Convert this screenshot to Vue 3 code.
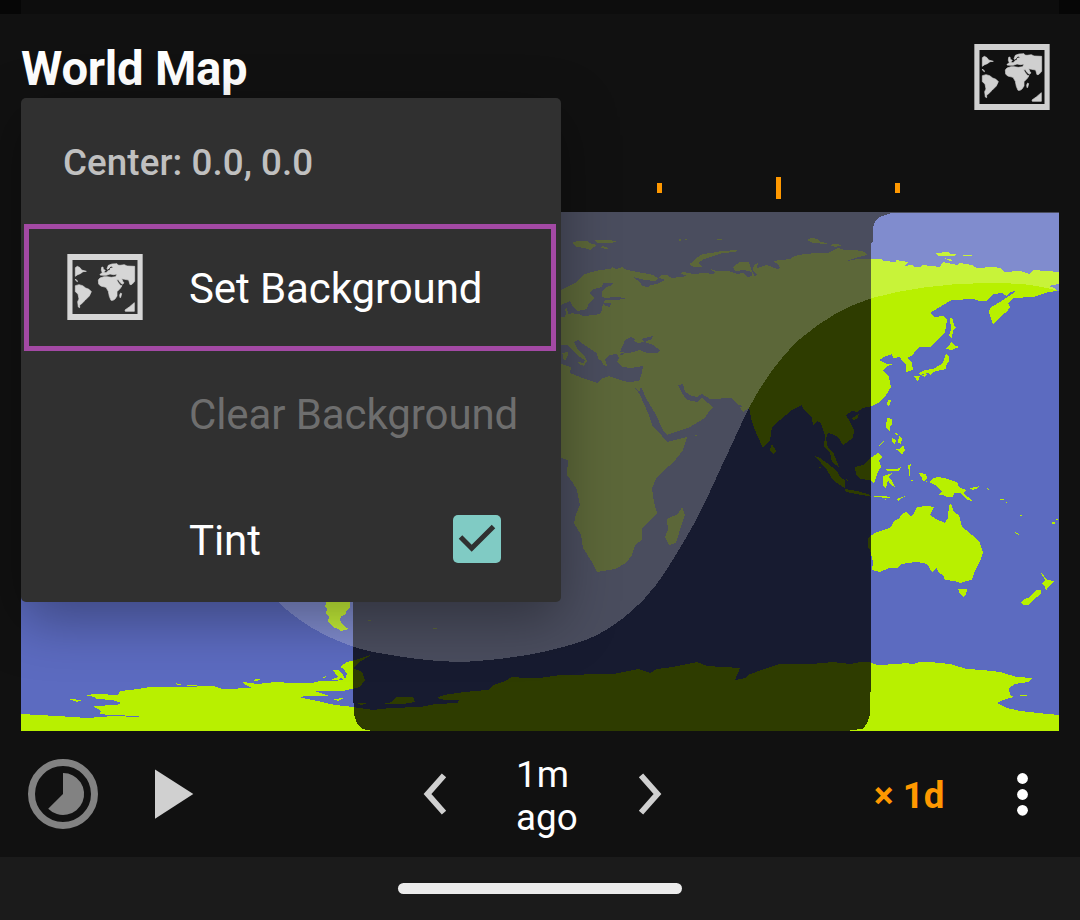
<script setup>
const ticks = [
  { x: 657, h: 10 },
  { x: 776, h: 22 },
  { x: 895, h: 10 },
]
</script>

<template>
  <div class="screen">
    <svg class="defs" width="0" height="0">
      <symbol id="map-icon" viewBox="73 72 226 198">
        <path fill="currentColor" fill-rule="evenodd" d="M73 72H299V270H73ZM88.500 90V252H283.500V90Z" />
        <g fill="currentColor" stroke="currentColor" stroke-width="2" stroke-linejoin="round">
          <path d="M97 113L103 109L111 113L116 120L130 124L120 125L112 131L104 134L97 139Z" />
          <path d="M97 147L100 150L104 153L103 155L98 151Z" />
          <path d="M97 167L108 164L119 167L128 174L138 178L145 185L139 198L127 210L116 221L110 225L110 233L106 231L104 215L108 207L105 192L97 185Z" />
          <path d="M172 132L178 128L175 121L176 112L180 111L181 118L187 121L182 127L189 128L196 122L192 116L196 106L207 102L222 101L224 105L231 106L244 104L252 108L275 109V154L267 163L261 164L257 150L245 148L236 146L240 155L243 159L237 163L231 157L226 149L221 149L226 158L232 166L237 167L232 175L222 185L222 198L216 207L210 211L204 211L199 199L196 184L189 172L173 168L167 162L166 150L171 144L183 140L192 140L205 142L218 140L222 132L212 134L201 132L190 136L178 136L171 135Z" />
          <path d="M233 189L236 191L233 202L231 203L230 195Z" />
          <path d="M274 218V244H247L246 240L260 230Z" />
        </g>
        <path class="gap" fill="none" stroke-width="3" d="M194 119Q201 121 200 115Q203 109 208 112" />
      </symbol>
    </svg>

    <div class="status"></div>

    <header class="head">
      <h1>World Map</h1>
      <svg class="mapicon head-icon"><use href="#map-icon" /></svg>
    </header>

    <i v-for="t in ticks" :key="t.x" class="tick" :style="{ left: t.x + 'px', height: t.h + 'px' }"></i>

    <svg class="world" viewBox="21 212 1038 519" shape-rendering="crispEdges">
      <rect x="21" y="212" width="1038" height="519" fill="#5c6bc0" />
      <g fill="#b8f000">
        <!-- Eurasia and Africa -->
        <path d="M540 300L561 290L575 283L585 274L592 272L600 270L610 269L612 267L616 269L622 267L627 270L643 273L653 275L658 278L655 281L645 280L633 277L640 282L642 286L648 287L651 285L657 284L665 280L659 278L661 275L667 275L672 278L680 277L687 276L680 273L684 272L693 274L704 273L713 274L715 272L710 269L717 271L728 271L737 274L743 273L747 277L752 276L752 272L744 270L735 271L733 267L740 262L749 262L751 269L755 277L748 281L742 279L750 280L757 275L753 270L754 265L758 263L757 268L764 271L765 276L759 274L754 270L760 267L767 265L777 269L780 268L779 265L773 261L790 259L795 256L804 254L817 253L828 253L838 248L845 250L855 250L865 252L867 255L855 258L847 261L858 259L872 259L882 259L883 261L896 262L896 260L908 262L904 266L912 265L915 267L920 267L922 265L940 267L943 262L957 265L960 263L972 265L977 268L993 267L1000 268L1005 272L1020 271L1030 274L1033 270L1059 272V284L1048 286L1055 288L1057 291L1048 292L1033 297L1013 298L1008 303L1010 307L1007 312L1002 315L993 324L989 313L990 308L1000 302L1012 294L1016 291L1010 292L1007 296L1002 293L993 294L986 301L979 301L973 299L952 300L943 305L930 313L935 317L943 316L947 320L945 332L938 339L930 347L920 347L915 351L913 355L907 358L912 363L913 370L906 372L906 364L902 361L900 357L893 358L892 354L886 356L879 360L887 364L893 364L887 366L883 370L889 377L891 387L885 397L878 403L872 406L863 408L857 412L852 411L846 415L850 422L854 430L853 438L843 445L838 437L834 435L828 433L826 438L828 448L833 452L839 467L832 462L830 453L824 447L825 435L821 423L817 421L813 425L812 418L803 408L802 405L792 410L780 420L772 427L770 440L763 448L757 435L752 422L749 408L743 412L740 407L743 406L738 405L732 398L710 399L702 394L697 397L692 396L685 392L683 384L678 385L682 393L687 400L697 402L702 398L713 407L709 411L705 418L690 427L667 435L663 430L655 413L647 400L641 387L639 392L633 385L640 395L648 413L653 427L658 431L667 442L687 437L683 450L673 463L664 470L656 479L652 488L654 502L657 513L642 528L642 540L635 545L632 555L626 563L615 569L597 572L592 562L583 548L581 535L574 523L576 514L580 505L577 490L573 483L567 475L568 460L561 458L540 458Z" />
        <!-- Arctic islands -->
        <path d="M572 243L577 241L587 241L592 244L597 245L590 250L585 248L577 247ZM595 240L606 240L617 241L612 243L597 243ZM602 246L609 248L606 249L601 248ZM689 264L693 262L696 258L703 254L711 253L722 251L737 250L735 252L723 253L710 257L704 259L698 263L702 267L694 267ZM679 239H681V241H679ZM685 239H687V240H685ZM717 239H722V240H717ZM807 240L811 238L818 239L820 242L827 243L826 244L813 243ZM829 245L834 244L843 245L835 247ZM936 253L948 252L951 254L957 254L954 256L938 256ZM963 255H972V256H963ZM944 258L953 260L950 261Z" />
        <!-- Madagascar, Sri Lanka -->
        <path d="M682 507L685 515L682 523L676 543L669 545L665 537L668 530L667 519L678 514ZM772 444L776 451L773 454L770 450ZM695 435H697V436H695Z" />
        <!-- Japan and Sakhalin -->
        <path d="M951 342L954 345L959 347L952 350L945 349L949 346ZM946 353L949 357L949 361L946 366L946 369L933 372L931 375L928 373L920 375L919 373L925 370L933 369L942 364L944 360ZM950 318L953 319L954 326L956 328L953 330L952 338L949 336L951 330ZM914 376L920 376L918 382ZM921 375L927 374L925 377Z" />
        <!-- South-east Asia -->
        <path d="M888 400L891 400L889 407L887 405ZM852 418L859 414L857 419L853 420ZM887 418L892 419L892 424L890 427L890 432L886 427ZM892 450L899 449L903 445L905 450L902 455L898 450ZM893 432L898 434L897 436ZM892 438L896 440L895 445L892 442ZM899 436L902 439L901 444L898 443ZM884 441L879 447L878 446ZM815 456L820 458L827 463L837 471L840 477L845 480V488L840 485L833 480L827 470ZM845 489L857 491L868 494L872 497L862 495L846 492ZM855 467L863 465L872 457L878 453L883 457L879 460L881 467L878 472L874 483L870 480L860 479L856 475ZM885 469L897 469L901 467L899 471L888 471ZM883 476L893 473L888 477L892 481L895 487L890 484L888 480L886 488L883 486ZM908 465L911 464L909 473ZM873 496L882 496L891 497L888 498L875 497ZM884 499L888 500L885 500ZM896 499L906 496L902 498L898 501ZM909 468H910V476H909ZM911 480H913V481H911ZM845 479L849 480L847 481ZM819 467L821 467L820 469Z" />
        <path d="M919 473L926 474L927 478L924 481L929 482L932 479L937 477L944 478L957 482L959 487L966 490L963 493L968 497L973 501L967 500L960 493L954 493L953 497L947 497L943 495L938 495L942 492L935 485L929 482L923 481L922 478ZM969 488L977 487L980 484L978 488L973 490ZM987 487L989 490L988 490ZM1000 499H1004V500H1000ZM1013 531L1017 533L1021 536L1017 534ZM1052 522H1055V524H1052ZM1056 519H1058V520H1056ZM1020 515H1022V516H1020ZM1006 502H1007V503H1006Z" />
        <!-- Australia and New Zealand -->
        <path d="M872 535L877 532L890 528L895 520L899 519L902 514L906 512L910 516L913 515L917 507L927 506L934 507L930 515L936 519L945 523L948 518L949 505L951 503L954 512L959 515L962 527L966 530L972 535L980 543L983 553L980 561L975 571L972 580L966 581L960 583L955 581L945 580L943 575L938 572L937 567L932 572L927 564L917 562L907 563L902 564L897 568L889 568L880 572L872 570L873 562L870 550L868 547L868 538ZM958 589L967 589L966 595L963 597L960 594ZM1041 573L1044 576L1047 580L1054 581L1049 586L1046 591L1045 587L1042 584L1045 580ZM1041 590L1041 593L1037 597L1032 601L1029 605L1023 605L1021 603L1023 600L1030 597L1036 590Z" />
        <!-- Patagonia -->
        <path d="M326 595H350V608L347 610L345 615L341 616L340 620L343 625L345 627L349 629L345 630L340 631L338 629L333 627L328 621L329 617L326 614L327 609L324 606L326 604ZM368 620H371V621H368ZM433 628H437V629H433Z" />
        <!-- Antarctica -->
        <path d="M21 714L57 716L72 717L87 718L113 716L139 717V716L110 715L100 714L101 711L93 706L117 705L121 703L113 700L97 699L94 697L85 695L97 694L118 695L120 691L138 689L150 687L180 687L213 686L223 689L252 688L244 684L243 682L257 684L275 682L292 683L312 683L320 681L332 681L343 680L341 678L338 680L331 680L338 677L333 670L338 670L343 675L345 679L347 674L344 669L340 667L347 662L355 660L373 654L361 661L353 668L362 672L365 680L360 687L343 691L315 691L323 694L329 696L307 696L299 697L312 700L322 702L335 705L353 707L373 710L390 708L420 707L435 704L458 703L459 700L445 700L437 698L444 695L457 693L474 691L488 690L494 685L505 681L512 677L525 678L540 678L560 675L573 675L594 674L613 674L638 669L650 673L657 669L673 667L687 664L697 662L707 666L740 668L735 680L745 678L748 675L767 668L780 664L793 664L812 664L833 662L850 664L860 662L870 662L877 665L898 664L905 663L913 664L920 662L930 662L950 664L967 669L983 670L1000 672L1017 677L1032 678L1029 682L1015 684L1009 688L1010 695L1014 697L1003 700L997 703L1007 708L1020 711L1038 713L1059 715V731H21ZM69 699L82 700L77 702ZM175 683L183 685L178 685ZM187 685H197V686H187ZM250 680L261 679L257 681ZM383 704L392 702L396 697L413 697L415 702L403 704ZM357 703L367 703L361 705ZM333 699L344 698L338 701ZM1020 695H1027V696H1020ZM322 678L326 676L325 678Z" />
      </g>
      <g fill="#5c6bc0">
        <!-- Mediterranean, Black Sea, Baltic, North Sea -->
        <path d="M561 345L567 345L572 350L578 356L585 360L584 363L577 362L579 364L584 366L587 361L585 357L578 350L574 342L578 340L583 344L592 350L597 353L598 359L602 361L603 365L607 366L605 359L609 355L617 354L619 358L617 362L622 367L631 368L637 367L643 366L642 373L639 381L628 382L617 379L609 376L603 378L597 383L588 380L580 377L570 373L571 367L561 364ZM617 354L624 353L622 355ZM620 352L623 345L625 340L631 337L635 339L634 341L638 343L644 342L641 339L653 336L652 339L645 342L653 345L660 350L658 353L647 353L640 350L633 352L628 353Z" />
        <path d="M603 283L613 283L612 285L607 287L602 291V297L605 298L615 297L627 298L617 300L605 300L604 303L611 303L610 307L605 306L603 304L601 313L595 315L583 316L579 314L568 313L570 309L577 311L587 309L589 303L594 298L590 294L591 291L594 289L602 287ZM540 305L561 305L570 301L573 307L578 312L568 314L567 307L565 309L566 313L565 317L561 317H540Z" />
      </g>
      <path d="M561 353L568 352V355L565 361L563 359V355Z" fill="#b8f000" />
      <path d="M353 212H1059V213H892L879 217L875 221L873 228L873 242L871 243V670L870 715L867 723L863 729L850 730V731H373L362 729L357 723L354 715L353 690Z" fill="#000" fill-opacity=".75" />
      <path d="M270 212H1059V291C1030 283 1010 283 983 283C940 284 905 289 872 298C847 306 823 319 800 339C779 358 760 386 749 408C738 430 731 447 723 463C710 492 700 515 683 543C671 563 660 582 645 598C628 616 605 634 580 642C560 648 530 658 463 662C430 662 402 657 373 652C341 645 306 629 278 602Z" fill="#fff" fill-opacity=".225" />
    </svg>

    <section class="menu">
      <div class="row caption">Center: 0.0, 0.0</div>
      <div class="row focus">
        <svg class="mapicon"><use href="#map-icon" /></svg>
        <span>Set Background</span>
      </div>
      <div class="row item off"><span>Clear Background</span></div>
      <div class="row item">
        <span>Tint</span>
        <svg class="check" viewBox="0 0 48 48">
          <rect width="48" height="48" rx="5" fill="#80cbc4" />
          <path d="M7.500 22L18.700 33.200L40.500 11.500" fill="none" stroke="#303030" stroke-width="5" />
        </svg>
      </div>
    </section>

    <footer class="bar">
      <svg class="controls" viewBox="0 731 1080 126">
        <circle cx="63" cy="794" r="31.5" fill="none" stroke="#828282" stroke-width="7" />
        <path d="M63 794V773A21 21 0 1 1 48.2 808.8Z" fill="#828282" />
        <path d="M155 769.5V818.7L193.3 794Z" fill="#d0d0d0" />
        <path d="M444 775.3L427.500 794L444 812.7M641 775.3L657.500 794L641 812.7" fill="none" stroke="#d0d0d0" stroke-width="5.8" />
        <g fill="#fff"><circle cx="1022.5" cy="778.5" r="5.4" /><circle cx="1022.5" cy="794.5" r="5.4" /><circle cx="1022.5" cy="810.3" r="5.4" /></g>
      </svg>
      <div class="ago">1m<br />ago</div>
      <div class="rate">× 1d</div>
    </footer>

    <nav class="nav"><i></i></nav>
  </div>
</template>

<style>
body { background: #111; }
</style>

<style scoped>
.screen { position: relative; width: 1080px; height: 920px; overflow: hidden; background: #111; color: #fff; font-family: Roboto, sans-serif; display: flex; flex-direction: column; }
.defs { position: absolute; }
.status { height: 14px; flex: none; background: linear-gradient(90deg, #060606 21px, #0d0d0d 21px 1059px, #060606 1059px); }
.head { height: 198px; flex: none; display: flex; justify-content: space-between; align-items: flex-start; padding: 0 30px 0 21px; box-sizing: border-box; }
h1 { margin: 27px 0 0; font-size: 47.25px; line-height: 56px; font-weight: 700; letter-spacing: -.25px; white-space: nowrap; }
.mapicon { width: 76px; height: 66px; color: #d6d6d6; flex: none; }
.head-icon { margin-top: 30px; color: #d0d0d0; }
.gap { stroke: #222; }
.tick { position: absolute; width: 5px; top: 188px; transform: translateY(-50%); background: #ff9800; }
.world { width: 1038px; height: 519px; margin-left: 21px; flex: none; display: block; }
.menu { position: absolute; left: 21px; top: 98px; width: 540px; height: 504px; border-radius: 5px; background: #303030; box-shadow: 0 18px 56px rgba(0, 0, 0, .34); }
.row { height: 126px; box-sizing: border-box; display: flex; align-items: center; font-size: 42px; line-height: 50px; letter-spacing: -.09px; white-space: nowrap; }
.row span { position: relative; top: 1px; }
.caption { padding: 4px 0 0 42px; font-size: 36.75px; font-weight: 500; letter-spacing: .07px; color: #c0c0c0; }
.focus { margin: 0 5px 0 3px; height: 127px; border: 5px solid #a349a4; padding-left: 38px; gap: 46px; }
.focus .mapicon { margin-bottom: 2px; }
.item { padding-left: 168px; justify-content: space-between; }
.off { color: #6e6e6e; }
.check { width: 48px; height: 48px; margin: 0 60px 3px 0; }
.bar { height: 126px; flex: none; position: relative; }
.controls { position: absolute; left: 0; top: 0; width: 1080px; height: 126px; }
.ago { position: absolute; left: 516px; top: 22px; font-size: 36.75px; line-height: 43px; }
.rate { position: absolute; left: 874px; top: 43px; font-size: 36.75px; line-height: 43px; font-weight: 700; color: #ff9800; white-space: nowrap; }
.nav { flex: 1; background: #1b1b1b; display: flex; justify-content: center; align-items: flex-start; }
.nav i { width: 284px; height: 11px; margin-top: 26px; border-radius: 6px; background: #ececec; }
</style>
